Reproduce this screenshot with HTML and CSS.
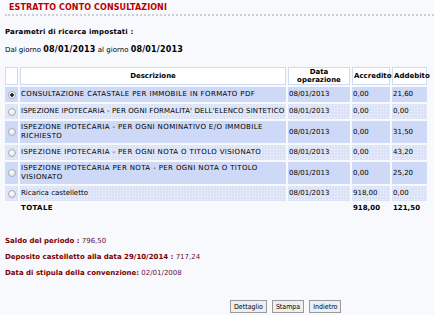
FILE: index.html
```html
<!DOCTYPE html>
<html lang="it">
<head>
  <meta charset="UTF-8" />
  <title>Estratto conto consultazioni</title>
  <link rel="stylesheet" href="styles.css">
</head>
<body>
  <div class="page">
    <h1 class="title">ESTRATTO CONTO CONSULTAZIONI</h1>

    <p class="params-title">Parametri di ricerca impostati :</p>
    <p class="params">Dal giorno <b>08/01/2013</b> al giorno <b>08/01/2013</b></p>

    <table class="grid">
      <thead>
        <tr>
          <th class="sel"></th>
          <th class="desc">Descrizione</th>
          <th class="date">Data<br>operazione</th>
          <th class="acc">Accredito</th>
          <th class="add">Addebito</th>
        </tr>
      </thead>
      <tbody>
        <tr class="odd">
          <td class="sel"><input type="radio" name="riga" checked></td>
          <td class="caps">CONSULTAZIONE CATASTALE PER IMMOBILE IN FORMATO PDF</td>
          <td>08/01/2013</td>
          <td>0,00</td>
          <td>21,60</td>
        </tr>
        <tr class="even">
          <td class="sel"><input type="radio" name="riga"></td>
          <td class="caps tight">ISPEZIONE IPOTECARIA - PER OGNI FORMALITA' DELL'ELENCO SINTETICO</td>
          <td>08/01/2013</td>
          <td>0,00</td>
          <td>0,00</td>
        </tr>
        <tr class="odd two">
          <td class="sel"><input type="radio" name="riga"></td>
          <td class="caps">ISPEZIONE IPOTECARIA - PER OGNI NOMINATIVO E/O IMMOBILE<br>RICHIESTO</td>
          <td>08/01/2013</td>
          <td>0,00</td>
          <td>31,50</td>
        </tr>
        <tr class="even">
          <td class="sel"><input type="radio" name="riga"></td>
          <td class="caps">ISPEZIONE IPOTECARIA - PER OGNI NOTA O TITOLO VISIONATO</td>
          <td>08/01/2013</td>
          <td>0,00</td>
          <td>43,20</td>
        </tr>
        <tr class="odd two">
          <td class="sel"><input type="radio" name="riga"></td>
          <td class="caps">ISPEZIONE IPOTECARIA PER NOTA - PER OGNI NOTA O TITOLO<br>VISIONATO</td>
          <td>08/01/2013</td>
          <td>0,00</td>
          <td>25,20</td>
        </tr>
        <tr class="even">
          <td class="sel"><input type="radio" name="riga"></td>
          <td>Ricarica castelletto</td>
          <td>08/01/2013</td>
          <td>918,00</td>
          <td>0,00</td>
        </tr>
        <tr class="total">
          <td></td>
          <td class="caps">TOTALE</td>
          <td></td>
          <td>918,00</td>
          <td>121,50</td>
        </tr>
      </tbody>
    </table>

    <div class="summary">
      <p><b>Saldo del periodo :</b> 796,50</p>
      <p><b>Deposito castelletto alla data 29/10/2014 :</b> 717,24</p>
      <p><b>Data di stipula della convenzione:</b> 02/01/2008</p>
    </div>

    <div class="actions">
      <button>Dettaglio</button>
      <button>Stampa</button>
      <button>Indietro</button>
    </div>
  </div>
</body>
</html>
```

FILE: styles.css
```css
* { box-sizing: border-box; }
body {
  margin: 0;
  background: #f8f9fd;
  font-family: "DejaVu Sans", Verdana, sans-serif;
  font-size: 7px;
  color: #000;
}
.page {
  padding: 0 5px;
}
.title {
  margin: 0 -5px 0 0;
  padding: 3px 4px 2px;
  font-size: 8px;
  line-height: 9px;
  letter-spacing: 0.1px;
  color: #b80000;
  border-bottom: 2px dotted #cfcfd6;
}
.params-title {
  margin: 12px 0 0;
  font-weight: bold;
  line-height: 9px;
  letter-spacing: 0.15px;
}
.params {
  margin: 8px 0 0;
  line-height: 9px;
}
.params b {
  font-size: 8px;
  letter-spacing: 0.2px;
}
.grid {
  margin-top: 10px;
  width: 426px;
  border-spacing: 2px;
  margin-left: -2px;
  table-layout: fixed;
}
.grid th {
  background: #fff;
  border: 1px solid #cfdaf3;
  font-weight: bold;
  line-height: 8px;
  padding: 0 1px;
  height: 18px;
}
.grid th.sel { width: 13px; }
.grid th.date { width: 62px; }
.grid th.acc { width: 38px; text-align: left; }
.grid th.add { width: 35px; text-align: left; }
.grid td {
  padding: 3px 1px;
  line-height: 9px;
  vertical-align: middle;
  white-space: nowrap;
}
.grid tr.two td {
  padding-top: 2px;
  padding-bottom: 2px;
}
.grid td.caps { letter-spacing: 0.38px; }
.grid td.caps.tight { letter-spacing: 0.12px; }
.grid td.sel {
  padding: 0;
  line-height: 0;
}
.grid tr.odd td { background: #cdd9f6; }
.grid tr.even td {
  background-color: #dce3f7;
  background-image: radial-gradient(circle, #f4f6fd 0.6px, transparent 0.9px);
  background-size: 3px 3px;
}
.grid tr.total td {
  font-weight: bold;
  padding-top: 1px;
}
.grid input[type="radio"] {
  appearance: none;
  display: block;
  width: 8px;
  height: 8px;
  margin: 0 auto;
  border: 1px solid #a9aebb;
  border-radius: 50%;
  background: radial-gradient(circle at 40% 35%, #fff, #d6d9e0);
}
.grid input[type="radio"]:checked {
  background: radial-gradient(circle, #222 0 1.5px, #fff 2px, #d6d9e0);
}
.summary {
  margin-top: 19px;
  color: #6a1038;
}
.summary p {
  margin: 0 0 7px;
  line-height: 9px;
}
.summary b { color: #7a0000; }
.actions {
  display: flex;
  gap: 5px;
  margin-top: 22px;
  padding-left: 225px;
}
.actions button {
  font-family: "DejaVu Sans Condensed", "DejaVu Sans", sans-serif;
  font-size: 7px;
  height: 13px;
  padding: 0 3px;
  background: #efeff2;
  border: 1px solid #9a9a9a;
  border-radius: 0;
  color: #000;
}
```
